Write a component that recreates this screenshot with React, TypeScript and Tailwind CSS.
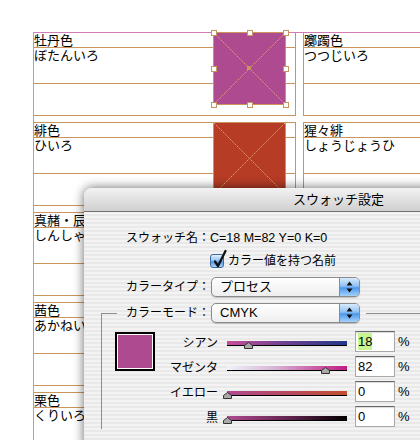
import React from "react";

const FRAME = "border-[#c9955d]";

interface SwatchRow {
  name: string;
  kana: string;
  color: string;
  rightName: string;
  rightKana: string;
  selected?: boolean;
}

const rows: SwatchRow[] = [
  { name: "牡丹色", kana: "ぼたんいろ", color: "bg-[#ae4a8f]", rightName: "躑躅色", rightKana: "つつじいろ", selected: true },
  { name: "緋色", kana: "ひいろ", color: "bg-[#b63c26]", rightName: "猩々緋", rightKana: "しょうじょうひ" },
  { name: "真赭・辰砂", kana: "しんしゃ", color: "bg-[#c0452f]", rightName: "紅梅色", rightKana: "こうばいいろ" },
  { name: "茜色", kana: "あかねいろ", color: "bg-[#a8322e]", rightName: "蘇芳", rightKana: "すおう" },
  { name: "栗色", kana: "くりいろ", color: "bg-[#6d3b26]", rightName: "鳶色", rightKana: "とびいろ" },
];

const handles = [
  "left-[-3px] top-[-3px]",
  "left-[33px] top-[-3px]",
  "left-[69px] top-[-3px]",
  "left-[-3px] top-[33px]",
  "left-[69px] top-[33px]",
  "left-[-3px] top-[69px]",
  "left-[33px] top-[69px]",
  "left-[69px] top-[69px]",
];

const TextFrame = ({ name, kana, className }: { name: string; kana: string; className: string }) => (
  <div className={`flex h-[84px] shrink-0 flex-col border ${FRAME} ${className}`}>
    <div className={`h-[15px] whitespace-nowrap border-b ${FRAME} leading-[14px]`}>{name}</div>
    <div className={`h-[36px] whitespace-nowrap border-b ${FRAME} leading-[14px]`}>{kana}</div>
    <div className="flex-1" />
  </div>
);

const Swatch = ({ color, selected }: { color: string; selected?: boolean }) => (
  <div className={`absolute left-[213px] top-0 z-10 h-[73px] w-[73px] border ${FRAME} ${color}`}>
    <svg className="absolute inset-0" width="71" height="71" viewBox="0 0 71 71">
      <path d="M0 0 L71 71 M71 0 L0 71" stroke="#e8ad6c" strokeWidth="0.9" strokeDasharray="1.5 1" />
    </svg>
    {selected &&
      handles.map((h) => (
        <div key={h} className={`absolute h-[6px] w-[6px] border border-[#c9955d] bg-white ${h}`} />
      ))}
    {selected && <div className="absolute left-[33px] top-[33px] h-[4px] w-[4px] bg-[#c9955d]" />}
  </div>
);

const Popup = ({ label }: { label: string }) => (
  <div className="ml-px flex h-[20px] w-[149px] overflow-hidden rounded-[5px] border border-[#8b8b8b] bg-[linear-gradient(to_bottom,#ffffff,#eeeeee)] shadow-[0_1px_1px_rgba(0,0,0,0.2)]">
    <span className="flex-1 pl-[8px] text-[13px] leading-[18px]">{label}</span>
    <span className="w-[20px] border-l border-[#6d8fbd] bg-[linear-gradient(to_bottom,#d8ebfc,#8fc1f3_45%,#4e98ea_55%,#a3d2fb)]">
      <svg width="19" height="18" viewBox="0 0 19 18">
        <path d="M9.5 3.5 L12.5 7.5 L6.5 7.5 Z M6.5 10.5 L12.5 10.5 L9.5 14.5 Z" fill="#111" />
      </svg>
    </span>
  </div>
);

const Checkbox = () => (
  <div className="relative h-[14px] w-[14px] rounded-[3px] border border-[#41689d] bg-[linear-gradient(to_bottom,#e2f1ff,#8cbef1_50%,#4d95e6_56%,#a9d5fb)]">
    <svg className="absolute left-[-1px] top-[-6px]" width="18" height="20" viewBox="0 0 18 20">
      <path d="M5 12.5 L8 17 L15.5 2" stroke="#111" strokeWidth="2.3" fill="none" strokeLinecap="round" strokeLinejoin="round" />
    </svg>
  </div>
);

const sliders = [
  { label: "シアン", value: 18, track: "bg-[linear-gradient(to_right,#c94f9a,#6a4090_50%,#23388a)]", selected: true },
  { label: "マゼンタ", value: 82, track: "bg-[linear-gradient(to_right,#eef3fb,#d8b4d6_40%,#c01a80)]" },
  { label: "イエロー", value: 0, track: "bg-[linear-gradient(to_right,#b04a90,#b84a5c_55%,#c24e2c)]" },
  { label: "黒", value: 0, track: "bg-[linear-gradient(to_right,#b04a90,#5a2048_55%,#000000)]" },
];

const SliderRow = ({ label, value, track, selected }: (typeof sliders)[number]) => (
  <div className="flex h-[25px] items-center">
    <span className="mt-[2px] w-[63px] text-right">{label}</span>
    <div className={`relative ml-[9px] mt-[4px] h-[5px] w-[120px] border-b border-black ${track}`}>
      <svg className="absolute top-[1px]" style={{ left: `${value * 1.2 - 4.5}px` }} width="9" height="7" viewBox="0 0 9 7">
        <path d="M0.5 6.5 V3.5 L4.5 0.5 L8.5 3.5 V6.5 Z" fill="#a9a9a9" stroke="#333" strokeWidth="1" />
      </svg>
    </div>
    <div className="ml-[8px] h-[21px] w-[40px] border border-[#a8a8a8] border-t-[#666] bg-white pl-[2px] pt-px text-[13px] leading-[17px] shadow-[inset_0_1px_1px_rgba(0,0,0,0.15)]">
      <span className={selected ? "inline-block bg-[#c6f591]" : "inline-block"}>{value}</span>
    </div>
    <span className="ml-[3px] text-[13px]">%</span>
  </div>
);

const SwatchDialog = () => (
  <div className="absolute left-[84px] top-[188px] z-20 h-[260px] w-[350px] overflow-hidden rounded-tl-[8px] font-['Liberation_Sans','Noto_Sans_CJK_JP',sans-serif] text-[12px] text-black shadow-[0_0_11px_rgba(0,0,0,0.6)]">
    <div className="h-[24px] border-b border-[#6f6f6f] bg-[linear-gradient(to_bottom,#f2f2f2,#d0d0d0)] pl-[209px] text-[13px] leading-[23px]">
      スウォッチ設定
    </div>
    <div className="flex h-full flex-col bg-[repeating-linear-gradient(to_bottom,#f3f3f3_0px,#f3f3f3_2px,#e9e9e9_2px,#e9e9e9_4px)] pt-[17px]">
      <div className="flex h-[18px] items-center">
        <span className="w-[126px] text-right">スウォッチ名：</span>
        <span className="text-[12.5px]">C=18 M=82 Y=0 K=0</span>
      </div>
      <div className="mt-[7px] flex h-[14px] items-center pl-[126px]">
        <Checkbox />
        <span className="ml-[4px]">カラー値を持つ名前</span>
      </div>
      <div className="mt-[9px] flex h-[20px] items-center">
        <span className="w-[126px] text-right">カラータイプ：</span>
        <Popup label="プロセス" />
      </div>
      <fieldset className="ml-[17px] mt-[6px] border-l border-t border-[#8e8e8e]">
        <legend className="ml-[15px] pl-[9px] pr-[6px]">
          <div className="flex items-center">
            <span className="w-[84px] text-right">カラーモード：</span>
            <Popup label="CMYK" />
          </div>
        </legend>
        <div className="flex pl-[13px] pt-[6px]">
          <div className="mt-[3px] h-[39px] w-[40px] shrink-0 border-2 border-black bg-[#ae4a8f] shadow-[inset_0_0_0_1px_#fff]" />
          <div className="flex flex-col">
            {sliders.map((s) => (
              <SliderRow key={s.label} {...s} />
            ))}
          </div>
        </div>
      </fieldset>
    </div>
  </div>
);

export default function App() {
  return (
    <div className="relative h-[440px] w-[420px] overflow-hidden bg-white font-['Noto_Sans_CJK_JP',sans-serif] text-[13px] text-black">
      <div className="pt-[32px]">
        {rows.map((r) => (
          <div key={r.name} className="relative flex h-[90px] items-start">
            <TextFrame name={r.name} kana={r.kana} className="ml-[33px] w-[263px]" />
            <TextFrame name={r.rightName} kana={r.rightKana} className="ml-[7px] w-[200px]" />
            <Swatch color={r.color} selected={r.selected} />
          </div>
        ))}
      </div>
      {/* margin guides */}
      <div className="absolute left-[33px] right-0 top-[32px] h-px bg-[#cf7cb9]" />
      <div className="absolute bottom-0 left-[33px] top-[32px] w-px bg-[#9c9cf3]" />
      <SwatchDialog />
    </div>
  );
}
